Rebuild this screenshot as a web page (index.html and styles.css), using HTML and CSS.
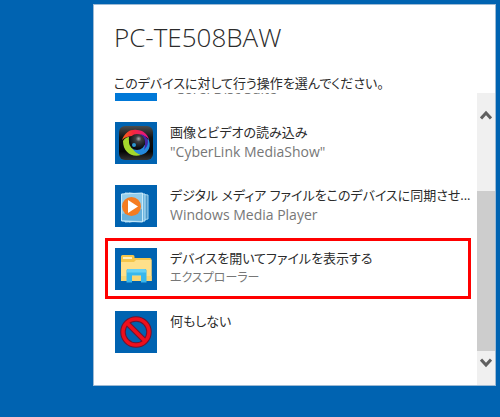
FILE: index.html
```html
<!DOCTYPE html>
<html lang="ja">
<head>
<meta charset="utf-8">
<title>PC-TE508BAW</title>
<link rel="stylesheet" href="styles.css">
</head>
<body>
<main class="dialog">
  <header class="head">
    <h1 class="title">PC-TE508BAW</h1>
    <p class="prompt">このデバイスに対して行う操作を選んでください。</p>
  </header>
  <div class="body">
    <div class="list">
      <button class="item" type="button">
        <span class="icon bright"></span>
        <span class="text"><span class="name">画像の再生</span><span class="sub">"Corel Disc Suite"</span></span>
      </button>
      <button class="item" type="button">
        <svg class="icon" viewBox="0 0 42 42" aria-hidden="true">
          <defs>
            <linearGradient id="tile" x1="0" y1="0" x2="0" y2="1"><stop offset="0" stop-color="#4c4c4c"/><stop offset=".35" stop-color="#111"/><stop offset=".75" stop-color="#050505"/><stop offset="1" stop-color="#333"/></linearGradient>
            <radialGradient id="lens" cx=".6" cy=".3" r=".6"><stop offset="0" stop-color="#a8adb0"/><stop offset=".3" stop-color="#3c3f42"/><stop offset="1" stop-color="#0b0d10"/></radialGradient>
            <linearGradient id="hot" x1="0" y1="0" x2="1" y2="0"><stop offset="0" stop-color="#ff6a13"/><stop offset=".4" stop-color="#f5283c"/><stop offset="1" stop-color="#e0148c"/></linearGradient>
          </defs>
          <rect x="4" y="4" width="34" height="34" rx="6" fill="url(#tile)"/>
          <path d="M7 18C10 10 16 7 22 8c6 0 10 4 12 9-6-5-11-5-16-3-4 0-8 1-11 4z" fill="url(#hot)"/>
          <path d="M8 19c2-3 4-4 6-4-1 6 2 12 12 18-9 3-18-3-18-14z" fill="#a4d82c"/>
          <path d="M26 33c-5-2-7-4-9-7 7 3 13 0 16-10 4 8 1 15-7 17z" fill="#2489dc"/>
          <path d="M25 12c5 1 8 4 8 8 0 3-2 6-4 8 2-6 1-11-4-16z" fill="#4525a5"/>
          <circle cx="22" cy="20" r="8" fill="url(#lens)"/>
          <circle cx="19" cy="23" r="2" fill="#2c96cf"/>
        </svg>
        <span class="text"><span class="name">画像とビデオの読み込み</span><span class="sub">"CyberLink MediaShow"</span></span>
      </button>
      <button class="item" type="button">
        <svg class="icon" viewBox="0 0 42 42" aria-hidden="true">
          <path d="M14 8l19 2v24l-19 3z" fill="#4e9bcb" stroke="#a4d5ee"/>
          <path d="M10 8l20 1v27l-20 1z" fill="#6db6df" stroke="#bce3f5"/>
          <path d="M6.500 9l21-1v29l-21-1z" fill="#93cdea" stroke="#c8eafa"/>
          <path d="M7 29l20-5v12l-20-1z" fill="#67b1dc"/>
          <circle cx="16.500" cy="21.500" r="9.500" fill="#f57c20"/>
          <path d="M13 15l10 6.500-10 6.500z" fill="#fff"/>
        </svg>
        <span class="text"><span class="name">デジタル メディア ファイルをこのデバイスに同期させ...</span><span class="sub">Windows Media Player</span></span>
      </button>
      <button class="item selected" type="button">
        <svg class="icon" viewBox="0 0 42 42" aria-hidden="true">
          <path d="M6 8.500q0-1.500 1.500-1.500H18q1.500 0 1.500 1.500V10H35q1.500 0 1.500 1.500V33H6z" fill="#f5c64a"/>
          <path d="M8 9h9v2H8z" fill="#fff0bd"/>
          <path d="M6 14h13l2-2h15.500v21H6z" fill="#ffe08a"/>
          <path d="M6 28h30.500v5H6z" fill="#f9d672"/>
          <path d="M11.500 22.500q0-1.500 1.500-1.500h17q1.500 0 1.500 1.500v12H26v-7h-9v7h-5.500z" fill="#38b8ed"/>
          <path d="M12 22.500q0-1.500 1.500-1.500h16q1.500 0 1.500 1.500v2H12z" fill="#65d0f5"/>
        </svg>
        <span class="text"><span class="name">デバイスを開いてファイルを表示する</span><span class="sub kana">エクスプローラー</span></span>
      </button>
      <button class="item" type="button">
        <svg class="icon" viewBox="0 0 42 42" aria-hidden="true">
          <g fill="none" stroke="#6e1430" stroke-width="5.500"><circle cx="21" cy="21" r="13"/><path d="M12 12l18 18"/></g>
          <g fill="none" stroke="#ee0f1c" stroke-width="3.500"><circle cx="21" cy="21" r="13"/><path d="M12 12l18 18"/></g>
        </svg>
        <span class="text"><span class="name">何もしない</span></span>
      </button>
    </div>
    <div class="scrollbar">
      <button class="arrow" type="button" aria-label="上へスクロール"><svg viewBox="0 0 12 10"><path d="M1 8.500l5-5.500 5 5.500"/></svg></button>
      <div class="track"><div class="thumb"></div></div>
      <button class="arrow down" type="button" aria-label="下へスクロール"><svg viewBox="0 0 12 10"><path d="M1 1.500L6 7l5-5.500"/></svg></button>
    </div>
  </div>
</main>
</body>
</html>
```
FILE: styles.css
```css
* { box-sizing: border-box; }

body {
  margin: 0;
  min-height: 100vh;
  padding: 4px 4px 31px 93px;
  display: flex;
  background: #0063b1;
  font-family: "Open Sans", "Noto Sans CJK JP", sans-serif;
  font-feature-settings: "palt";
  color: #2b2b2b;
}

.dialog {
  flex: 1;
  min-width: 0;
  display: flex;
  flex-direction: column;
  background: #fff;
  border: 1px solid #9dbad4;
}

.head { padding: 13px 20px 0 20px; }

.title {
  margin: 0;
  font-size: 26px;
  line-height: 38px;
  font-weight: 300;
}

.prompt {
  margin: 17px 0 0;
  font-size: 13px;
  line-height: 20px;
  font-weight: 400;
  white-space: nowrap;
}

.body {
  flex: 1 0 0;
  min-height: 0;
  display: flex;
}

.list {
  flex: 1;
  min-width: 0;
  height: 293px;
  overflow: hidden;
  display: flex;
  flex-direction: column;
  justify-content: flex-end;
  gap: 4px;
  padding: 0 7px 25px 12px;
}

.item {
  flex: none;
  display: flex;
  gap: 13px;
  width: 100%;
  height: 59px;
  padding: 9px 0 8px 9px;
  border: 0;
  background: none;
  font: inherit;
  font-feature-settings: inherit;
  color: inherit;
  text-align: left;
}

.selected {
  outline: 3px solid #f00;
  outline-offset: -2px;
}

.icon {
  flex: none;
  width: 42px;
  height: 42px;
  background: #0063b1;
}

.bright { background: #0078d7; }

.text {
  min-width: 0;
  display: flex;
  flex-direction: column;
}

.name, .sub {
  font-size: 13px;
  line-height: 20px;
  font-weight: 400;
  white-space: nowrap;
}

.sub {
  font-size: 14px;
  color: #777;
}

.kana { font-size: 12px; }

.scrollbar {
  width: 18px;
  display: flex;
  flex-direction: column;
  background: #f0f0f0;
}

.arrow {
  height: 44px;
  padding: 0;
  border: 0;
  background: none;
  display: flex;
  align-items: center;
  justify-content: center;
}

.arrow svg {
  width: 12px;
  height: 10px;
  fill: none;
  stroke: #606060;
  stroke-width: 3;
}

.track {
  flex: 1;
  display: flex;
  flex-direction: column;
  justify-content: flex-end;
}

.thumb {
  height: 75%;
  background: #cdcdcd;
}

.down { height: 34px; padding-bottom: 10px; }
```
